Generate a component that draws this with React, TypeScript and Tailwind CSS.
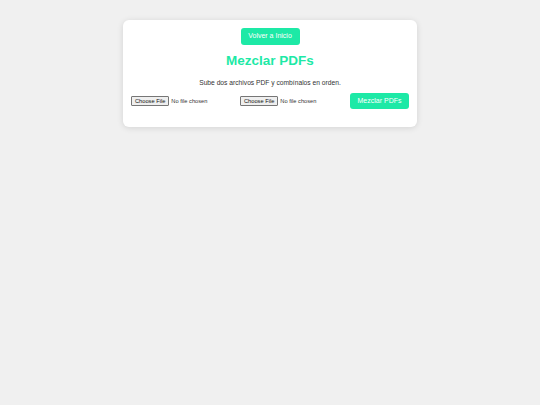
export default function App() {
  return (
    <div
      className="min-h-screen w-full bg-[#f0f0f0] pt-5"
      style={{ fontFamily: '"Liberation Sans", Arial, sans-serif' }}
    >
      <div className="mx-auto w-[294px] rounded-md bg-white px-2 pt-2 pb-[18px] shadow-[0_1px_6px_rgba(0,0,0,0.12)]">
        <div className="flex justify-center">
          <button className="h-[17px] w-[59px] rounded-[3px] bg-[#1de9a6] text-[7px] text-white">
            Volver a Inicio
          </button>
        </div>
        <h1 className="mt-[7px] text-center text-[13.5px] font-bold leading-[18px] text-[#1de9a6]">
          Mezclar PDFs
        </h1>
        <p className="mt-[8px] text-center text-[6.7px] leading-[9px] text-[#333]">
          Sube dos archivos PDF y combínalos en orden.
        </p>
        <div className="mt-[6px] flex items-center">
          <input
            type="file"
            accept="application/pdf"
            className="w-[109px] text-[5.7px] text-[#333] file:mr-[2px] file:rounded-[1px] file:border file:border-solid file:border-[#767676] file:bg-[#efefef] file:px-[3px] file:py-0 file:text-[#111]"
          />
          <input
            type="file"
            accept="application/pdf"
            className="w-[109px] text-[5.7px] text-[#333] file:mr-[2px] file:rounded-[1px] file:border file:border-solid file:border-[#767676] file:bg-[#efefef] file:px-[3px] file:py-0 file:text-[#111]"
          />
          <button className="ml-auto h-[16px] w-[59px] rounded-[3px] bg-[#1de9a6] text-[7px] text-white">
            Mezclar PDFs
          </button>
        </div>
      </div>
    </div>
  );
}
